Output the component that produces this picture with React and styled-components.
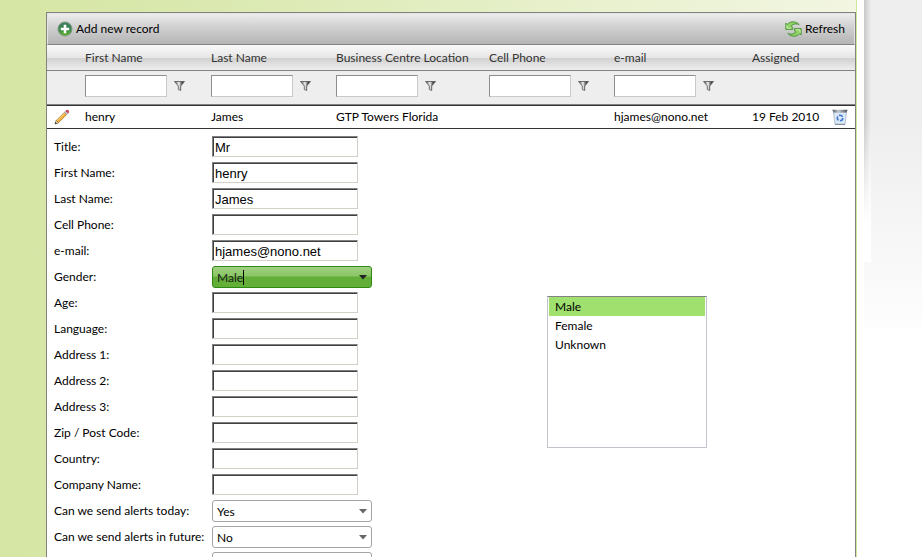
import React, { useState } from 'react';
import styled, { createGlobalStyle, css } from 'styled-components';

const uiFont = 'Lato, "Open Sans", sans-serif';

const GlobalStyle = createGlobalStyle`
  * {
    box-sizing: border-box;
  }

  html,
  body,
  #root {
    height: 100%;
  }

  body {
    margin: 0;
    overflow: hidden;
    font-family: ${uiFont};
    font-size: 12px;
    line-height: 16px;
    color: #000;
  }
`;

const Page = styled.div`
  display: grid;
  grid-template-columns: 1fr 7px 58px;
  height: 100%;
  overflow: hidden;
  background: #fff;
`;

const Panel = styled.main`
  min-width: 0;
  padding: 12px 0 0 46px;
  border-right: 1px solid #cfe69a;
  background: linear-gradient(90deg, #d6e6a4, #d9e8ad 20%, #f2f6e2);
`;

const Backdrop = styled.div`
  grid-column: 3;
  height: 330px;
  background:
    linear-gradient(rgba(255, 255, 255, 0) 120px, #fff 220px) no-repeat 0 0 / 7px 262px,
    linear-gradient(90deg, rgba(0, 0, 0, 0.16), rgba(0, 0, 0, 0)) no-repeat 0 0 / 7px 262px,
    linear-gradient(#eee 0, #eee 120px, #fdfdfd 325px, #fff);
`;

const Grid = styled.section`
  min-height: 100%;
  border: 1px solid #828282;
  background: #fff;
`;

const Toolbar = styled.div`
  display: flex;
  justify-content: space-between;
  align-items: center;
  height: 32px;
  padding: 0 9px;
  border: 1px solid #e4e4e4;
  border-bottom: 1px solid #828282;
  background: linear-gradient(#ececec, #cfcfcf 45%, #b5b5b5);
`;

const ToolbarButton = styled.button`
  display: flex;
  align-items: center;
  gap: 3px;
  padding: 0;
  border: 0;
  background: none;
  font: inherit;
  color: #000;
  cursor: pointer;
`;

const IconButton = styled.button`
  display: block;
  padding: 0;
  border: 0;
  background: none;
  cursor: pointer;

  svg {
    display: block;
  }
`;

const Table = styled.table`
  width: 100%;
  table-layout: fixed;
  border-collapse: separate;
  border-spacing: 0;
`;

const HeaderRow = styled.tr`
  background: linear-gradient(#fafafa, #e6e6e6 48%, #d2d2d2 52%, #f0f0f0);
`;

const HeaderCell = styled.th`
  height: 26px;
  padding: 0 0 0 7px;
  border-bottom: 1px solid #828282;
  font-weight: 400;
  text-align: left;
  white-space: nowrap;
  color: #333;
`;

const FilterCell = styled.td`
  height: 34px;
  padding: 0 0 0 7px;
  border-bottom: 1px solid #828282;
  background: #eee;
`;

const Filter = styled.div`
  display: flex;
  align-items: center;
  gap: 7px;
  padding-bottom: 3px;
`;

const FilterInput = styled.input`
  width: 82px;
  height: 22px;
  padding: 0 3px;
  border: 1px solid;
  border-color: #8e8e8e #c9c9c9 #c9c9c9 #8e8e8e;
  background: #fff;
  font: inherit;
`;

const DataCell = styled.td`
  height: 24px;
  padding: 0 0 0 7px;
  border-top: 1px solid #333;
  border-bottom: 1px solid #333;
  white-space: nowrap;
`;

const EditForm = styled.form`
  position: relative;
  display: grid;
  grid-auto-rows: 26px;
  padding: 5px 7px;
`;

const FieldRow = styled.div`
  display: grid;
  grid-template-columns: 158px 1fr;
  align-items: start;
  padding-top: 2px;
`;

const FieldLabel = styled.label`
  line-height: 22px;
  white-space: nowrap;
`;

const TextInput = styled.input`
  width: 146px;
  height: 21px;
  padding: 2px 2px 0;
  border: 1px solid;
  border-color: #808080 #d4d0c8 #d4d0c8 #808080;
  box-shadow: inset 1px 1px 0 #404040;
  background: #fff;
  font: 13px/16px "Liberation Sans", Arial, sans-serif;
  outline: 0;
`;

const comboStyles = css`
  width: 160px;
  height: 22px;
  padding: 1px 4px 0;
  border: 1px solid #a3a3a3;
  border-radius: 3px;
  background: #fff;
  font: 12px/16px ${uiFont};
  color: #000;
`;

const SelectWrap = styled.div`
  display: flex;
  align-items: center;

  svg {
    margin-left: -13px;
    pointer-events: none;
  }
`;

const Select = styled.select`
  ${comboStyles}
  appearance: none;
`;

const Combo = styled.div`
  ${comboStyles}
  display: flex;
  align-items: center;
  border-color: #2f8a14;
  background: linear-gradient(#a0d080, #8ac566 45%, #63ad38 50%, #63b038);

  svg {
    margin-left: auto;
  }
`;

const ComboInput = styled.input`
  field-sizing: content;
  max-width: 130px;
  padding: 0;
  border: 0;
  outline: 0;
  background: none;
  font: inherit;
  color: #1c1c1c;
  caret-color: transparent;
`;

const Caret = styled.span`
  width: 1px;
  height: 15px;
  background: #000;
`;

const ComboList = styled.ul`
  position: absolute;
  top: 167px;
  left: 500px;
  width: 160px;
  height: 152px;
  margin: 0;
  padding: 0 1px;
  border: 1px solid #c3c3cb;
  border-top-color: #828282;
  background: #fff;
  list-style: none;
`;

const ComboOption = styled.li`
  height: 19px;
  padding: 2px 6px 1px;
  background: ${({ $active }) => ($active ? '#9fe06f' : 'none')};
  cursor: pointer;
`;

const AddIcon = () => (
  <svg width="16" height="16" viewBox="0 0 16 16" aria-hidden="true">
    <defs>
      <linearGradient id="add" x2="0" y2="1">
        <stop stopColor="#3e8060" />
        <stop offset="0.5" stopColor="#39834b" />
        <stop offset="1" stopColor="#68b62e" />
      </linearGradient>
    </defs>
    <circle cx="8" cy="8" r="7" fill="url(#add)" stroke="#7f9a89" />
    <path d="M8 3.800v8.400M3.800 8h8.400" stroke="#fff" strokeWidth="2.600" />
  </svg>
);

const RefreshIcon = () => (
  <svg width="17" height="16" viewBox="0 0 17 16" aria-hidden="true">
    <g fill="#8ed064" stroke="#3c8a2c" strokeWidth="0.8" strokeLinejoin="round">
      <path d="M.8 2.200 2.400 3.200C5 .2 10.500 -.4 14.200 3.600 11.500 2.400 8.500 2.600 6.200 5L7.600 6.200V8.400H.8z" />
      <path d="M16.200 13.800 14.600 12.800C12 15.800 6.500 16.400 2.800 12.400 5.500 13.600 8.500 13.400 10.800 11L9.400 9.800V7.600H16.200z" />
    </g>
    <path d="M2 4.400v2.800h3.600M11 8.800h4v3" fill="none" stroke="#d4f2bb" strokeWidth="0.9" />
  </svg>
);

const FunnelIcon = () => (
  <svg width="11" height="10" viewBox="0 0 11 10" aria-hidden="true">
    <defs>
      <linearGradient id="funnel">
        <stop offset="0.1" stopColor="#666" />
        <stop offset="0.45" stopColor="#f4f4f4" />
        <stop offset="0.75" stopColor="#444" />
      </linearGradient>
    </defs>
    <path d="M.5 .5h10L6.700 5v4.500L4.300 8.500V5z" fill="url(#funnel)" stroke="#555" strokeWidth="0.8" />
  </svg>
);

const PencilIcon = () => (
  <svg width="16" height="16" viewBox="0 0 16 16" aria-hidden="true">
    <path d="M1 15 2.200 11.200 4.800 13.800z" fill="#f3dcb0" stroke="#665038" strokeWidth="0.6" />
    <path d="M2.400 11.400 10.400 3.400 12.600 5.600 4.600 13.600z" fill="#f0ae35" stroke="#a06a1c" strokeWidth="0.7" />
    <path d="M3.300 11.600 10.600 4.300" stroke="#ffe08b" />
    <path d="M10.400 3.400 11.500 2.100 13.900 4.500 12.600 5.600z" fill="#c9ccd6" stroke="#7f8391" strokeWidth="0.5" />
    <path d="M11.500 1.900 12.400 1Q14 .4 15 2 15.500 3.200 14.100 4.500z" fill="#cf4350" />
    <path d="M1 15 1.500 13 3 14.500z" fill="#222" />
  </svg>
);

const RecycleBinIcon = () => (
  <svg width="16" height="16" viewBox="0 0 16 16" aria-hidden="true">
    <defs>
      <linearGradient id="lid">
        <stop stopColor="#555b64" />
        <stop offset="0.4" stopColor="#c4cad2" />
        <stop offset="1" stopColor="#4a4f57" />
      </linearGradient>
    </defs>
    <path d="M1.500 3h13L13 15.500H3z" fill="#dce8f6" stroke="#a3b5cc" strokeWidth="0.8" />
    <path d="M.3 .8h15.400L14.500 3.600h-13z" fill="url(#lid)" />
    <path d="M3 15.300h10" stroke="#7d8794" />
    <circle cx="8" cy="9" r="2.700" fill="none" stroke="#4078d0" strokeWidth="1.600" strokeDasharray="4.200 1.450" />
  </svg>
);

const ArrowIcon = ({ color = '#666' }) => (
  <svg width="8" height="5" viewBox="0 0 8 5" aria-hidden="true">
    <path d="M0 0h8L4 4.500z" fill={color} />
  </svg>
);

const columns = [
  { title: 'First Name', value: 'henry', width: 126, filter: true },
  { title: 'Last Name', value: 'James', width: 125, filter: true },
  { title: 'Business Centre Location', value: 'GTP Towers Florida', width: 153, filter: true },
  { title: 'Cell Phone', value: '', width: 125, filter: true },
  { title: 'e-mail', value: 'hjames@nono.net', filter: true },
  { title: 'Assigned', value: '19 Feb 2010', width: 80 },
];

const fields = [
  { label: 'Title:', value: 'Mr' },
  { label: 'First Name:', value: 'henry' },
  { label: 'Last Name:', value: 'James' },
  { label: 'Cell Phone:' },
  { label: 'e-mail:', value: 'hjames@nono.net' },
  { label: 'Gender:', type: 'combo' },
  { label: 'Age:' },
  { label: 'Language:' },
  { label: 'Address 1:' },
  { label: 'Address 2:' },
  { label: 'Address 3:' },
  { label: 'Zip / Post Code:' },
  { label: 'Country:' },
  { label: 'Company Name:' },
  { label: 'Can we send alerts today:', type: 'select', value: 'Yes' },
  { label: 'Can we send alerts in future:', type: 'select', value: 'No' },
  { label: '', type: 'select', value: '' },
];

const genders = ['Male', 'Female', 'Unknown'];

const Field = ({ field, id, gender, setGender }) => {
  const { label, type, value } = field;

  const renderControl = () => {
    if (type === 'combo') {
      return (
        <Combo>
          <ComboInput
            id={id}
            role="combobox"
            aria-expanded="true"
            aria-controls="gender-list"
            value={gender}
            onChange={(e) => setGender(e.target.value)}
            autoFocus
          />
          <Caret />
          <ArrowIcon color="#222" />
        </Combo>
      );
    }
    if (type === 'select') {
      return (
        <SelectWrap>
          <Select id={id} defaultValue={value} aria-label={label || 'Other'}>
            {value === '' && <option value="" />}
            <option>Yes</option>
            <option>No</option>
          </Select>
          <ArrowIcon />
        </SelectWrap>
      );
    }
    return <TextInput id={id} defaultValue={value} />;
  };

  return (
    <FieldRow>
      <FieldLabel htmlFor={id}>{label}</FieldLabel>
      {renderControl()}
    </FieldRow>
  );
};

const App = () => {
  const [gender, setGender] = useState('Male');

  return (
    <>
      <GlobalStyle />
      <Page>
        <Panel>
          <Grid>
            <Toolbar>
              <ToolbarButton>
                <AddIcon />
                Add new record
              </ToolbarButton>
              <ToolbarButton>
                <RefreshIcon />
                Refresh
              </ToolbarButton>
            </Toolbar>
            <Table>
              <colgroup>
                <col width="31" />
                {columns.map(({ title, width }) => (
                  <col key={title} width={width} />
                ))}
                <col width="30" />
              </colgroup>
              <thead>
                <HeaderRow>
                  <HeaderCell />
                  {columns.map(({ title }) => (
                    <HeaderCell key={title}>{title}</HeaderCell>
                  ))}
                  <HeaderCell />
                </HeaderRow>
                <tr>
                  <FilterCell />
                  {columns.map(({ title, filter }) => (
                    <FilterCell key={title}>
                      {filter && (
                        <Filter>
                          <FilterInput aria-label={`Filter ${title}`} />
                          <IconButton aria-label={`Filter options for ${title}`}>
                            <FunnelIcon />
                          </IconButton>
                        </Filter>
                      )}
                    </FilterCell>
                  ))}
                  <FilterCell />
                </tr>
              </thead>
              <tbody>
                <tr>
                  <DataCell>
                    <IconButton aria-label="Edit">
                      <PencilIcon />
                    </IconButton>
                  </DataCell>
                  {columns.map(({ title, value }) => (
                    <DataCell key={title}>{value}</DataCell>
                  ))}
                  <DataCell>
                    <IconButton aria-label="Delete">
                      <RecycleBinIcon />
                    </IconButton>
                  </DataCell>
                </tr>
              </tbody>
            </Table>
            <EditForm>
              {fields.map((field, i) => (
                <Field
                  key={i}
                  id={`field-${i}`}
                  field={field}
                  gender={gender}
                  setGender={setGender}
                />
              ))}
              <ComboList id="gender-list" role="listbox">
                {genders.map((name) => (
                  <ComboOption
                    key={name}
                    role="option"
                    aria-selected={name === gender}
                    $active={name === gender}
                    onClick={() => setGender(name)}
                  >
                    {name}
                  </ComboOption>
                ))}
              </ComboList>
            </EditForm>
          </Grid>
        </Panel>
        <Backdrop />
      </Page>
    </>
  );
};

export default App;
